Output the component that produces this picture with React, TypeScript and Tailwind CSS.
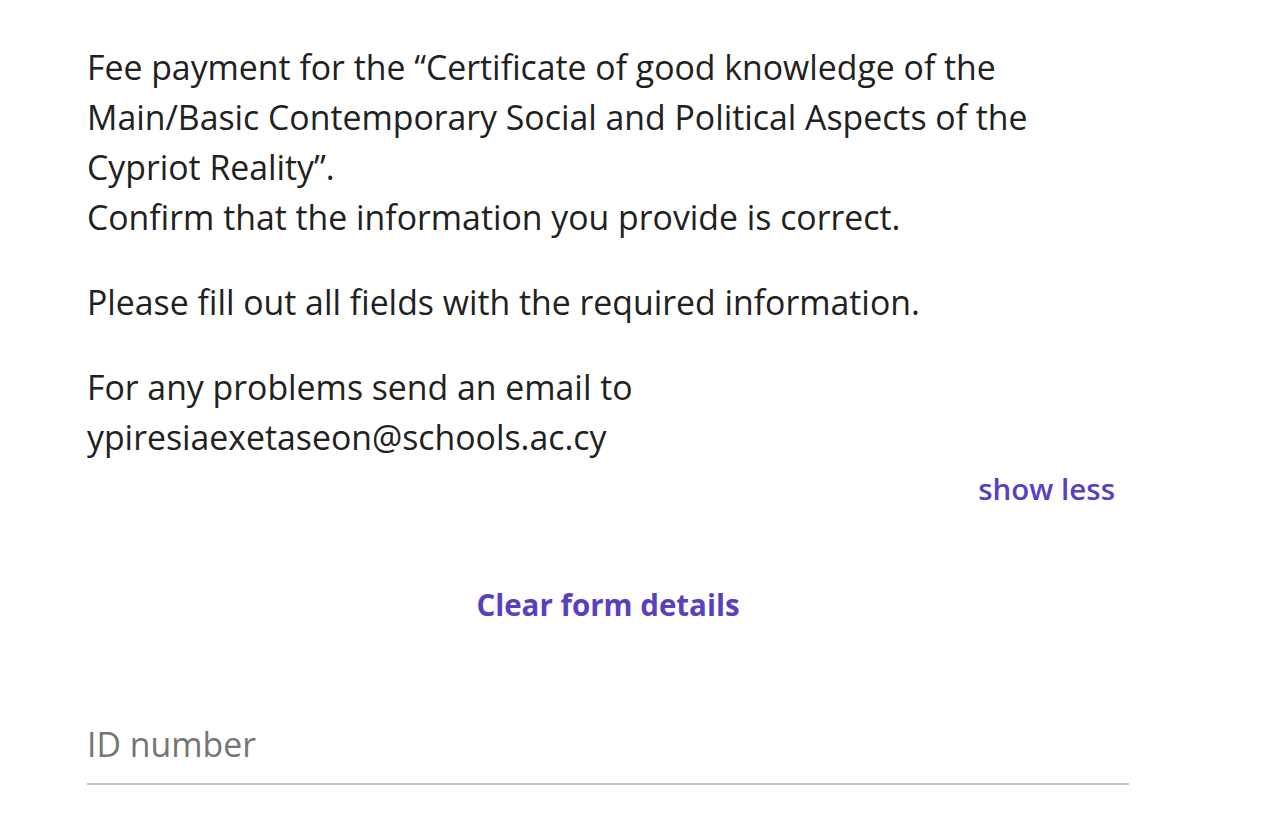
export default function App() {
  return (
    <div
      className="min-h-[814px] bg-white text-[#212121]"
      style={{ fontFamily: '"Open Sans", "Noto Sans", sans-serif' }}
    >
      <div className="ml-[87px] w-[1042px] pt-[42px]">
        <div className="text-[33.8px] leading-[50px]">
          <p>
            Fee payment for the “Certificate of good knowledge of the
            <br />
            Main/Basic Contemporary Social and Political Aspects of the
            <br />
            Cypriot Reality”.
          </p>
          <p>Confirm that the information you provide is correct.</p>
          <p className="mt-[35px]">Please fill out all fields with the required information.</p>
          <p className="mt-[35px]">
            For any problems send an email to
            <br />
            ypiresiaexetaseon@schools.ac.cy
          </p>
        </div>

        <div className="mt-[2px] flex justify-end pr-[14px]">
          <button className="text-[29.5px] font-semibold leading-[50px] text-[#5840bf]">
            show less
          </button>
        </div>

        <div className="mt-[66px] flex justify-center">
          <button className="text-[29.5px] font-bold leading-[50px] text-[#5840bf]">
            Clear form details
          </button>
        </div>

        <div className="mt-[89px] border-b-2 border-[#c4c4c4] pb-[14px]">
          <div className="text-[33.8px] leading-[50px] text-[#757575]">ID number</div>
        </div>
      </div>
    </div>
  )
}
